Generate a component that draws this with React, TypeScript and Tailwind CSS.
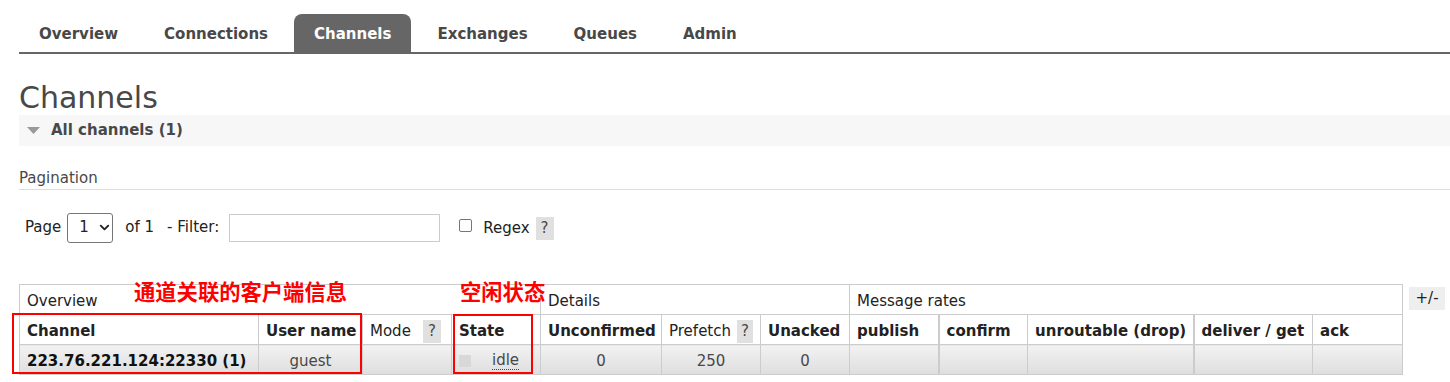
import { ChevronDown } from "lucide-react";

const FONT = "font-['DejaVu_Sans',Verdana,sans-serif]";

function Q() {
  return (
    <span className="inline-flex items-center justify-center w-[18px] h-[23px] bg-[#e0e0e0] text-[#484848] font-normal text-[15px] align-middle">
      ?
    </span>
  );
}

export default function App() {
  const nav = ["Overview", "Connections", "Channels", "Exchanges", "Queues", "Admin"];
  const widths = [239, 104, 89, 89, 121, 99, 89, 89, 89, 166, 119, 90];
  const th = "h-[30px] border border-[#ccc] px-[7px] pt-[3px] text-left align-middle whitespace-nowrap text-[15px]";
  const td = "h-[30px] border border-[#ccc] px-[7px] pt-[3px] align-middle whitespace-nowrap text-[15px] bg-gradient-to-b from-[#f2f2f2] to-[#dedede]";
  return (
    <div className={`relative w-[1450px] h-[382px] overflow-hidden bg-white ${FONT} text-[#484848]`}>
      <div className="pl-[19px]">
        {/* nav */}
        <div className="pt-[14px]">
          <div className="flex h-[40px] border-b-2 border-[#666] gap-[6px]">
            {nav.map((n) => (
              <div
                key={n}
                className={`flex items-center pt-[2px] px-5 text-[15px] font-bold ${
                  n === "Channels" ? "bg-[#666] text-white rounded-t-[8px]" : "text-[#484848]"
                }`}
              >
                {n}
              </div>
            ))}
          </div>
        </div>

        {/* heading */}
        <h1 className="mt-[27px] text-[30px] leading-[34px] font-normal text-[#484848]">Channels</h1>

        {/* section band */}
        <div className="h-[31px] bg-[#f7f7f7] flex items-center pl-[8px]">
          <svg width="13" height="8" viewBox="0 0 13 8">
            <polygon points="0,0 13,0 6.5,7" fill="#999" />
          </svg>
          <span className="ml-[11px] text-[15px] font-bold text-[#484848]">All channels (1)</span>
        </div>

        {/* pagination */}
        <div className="mt-[23px] border-b border-[#ddd] pb-[2px] text-[15px] leading-[18px] text-[#484848]">
          Pagination
        </div>

        <div className="mt-[22px] h-[30px] flex items-center pl-[6px] pt-[1px] text-[15px] text-[#222]">
          <span>Page</span>
          <div className="ml-[6px] w-[46px] h-[30px] border border-[#767676] rounded-[3px] flex items-center pl-[11px] gap-[8px]">
            <span>1</span>
            <ChevronDown size={15} strokeWidth={3} className="text-[#222]" />
          </div>
          <span className="ml-[12px]">of 1</span>
          <span className="ml-[13px]">- Filter:</span>
          <div className="ml-[10px] w-[211px] h-[28px] border border-[#ccc]" />
          <div className="ml-[19px] w-[13px] h-[13px] border border-[#767676] rounded-[2px] -mt-[4px]" />
          <span className="ml-[11px] mt-[2px]">Regex</span>
          <span className="ml-[6px] mt-[2px]">
            <Q />
          </span>
        </div>

        {/* table */}
        <div className="mt-[42px] flex items-start">
          <table className="table-fixed border-collapse w-[1383px] text-[#222]">
            <colgroup>
              {widths.map((w, i) => (
                <col key={i} style={{ width: w }} />
              ))}
            </colgroup>
            <thead>
              <tr>
                <th colSpan={4} className={`${th} font-normal`}>
                  Overview
                </th>
                <th colSpan={3} className={`${th} font-normal`}>
                  Details
                </th>
                <th colSpan={5} className={`${th} font-normal`}>
                  Message rates
                </th>
              </tr>
              <tr>
                <th className={`${th} font-bold`}>Channel</th>
                <th className={`${th} font-bold`}>User name</th>
                <th className={`${th} font-normal`}>
                  <span className="flex items-center gap-[12px]">
                    Mode <Q />
                  </span>
                </th>
                <th className={`${th} font-bold`}>State</th>
                <th className={`${th} font-bold`}>Unconfirmed</th>
                <th className={`${th} font-normal`}>
                  <span className="flex items-center gap-[6px]">
                    Prefetch <Q />
                  </span>
                </th>
                <th className={`${th} font-bold`}>Unacked</th>
                <th className={`${th} font-bold`}>publish</th>
                <th className={`${th} font-bold border-l-2`}>confirm</th>
                <th className={`${th} font-bold`}>unroutable (drop)</th>
                <th className={`${th} font-bold border-l-2`}>deliver / get</th>
                <th className={`${th} font-bold`}>ack</th>
              </tr>
            </thead>
            <tbody>
              <tr>
                <td className={`${td} font-bold text-[#111]`}>223.76.221.124:22330 (1)</td>
                <td className={`${td} text-center text-[#484848]`}>guest</td>
                <td className={td}></td>
                <td className={td}>
                  <div className="flex items-center">
                    <span className="w-[12px] h-[12px] bg-[#d8d8d8] inline-block" />
                    <span className="ml-[21px] text-[#484848] border-b border-dotted border-[#484848] leading-[17px]">
                      idle
                    </span>
                  </div>
                </td>
                <td className={`${td} text-center text-[#484848]`}>0</td>
                <td className={`${td} text-center text-[#484848]`}>250</td>
                <td className={`${td} text-center text-[#484848]`}>0</td>
                <td className={td}></td>
                <td className={`${td} border-l-2`}></td>
                <td className={td}></td>
                <td className={`${td} border-l-2`}></td>
                <td className={td}></td>
              </tr>
            </tbody>
          </table>
          <div className="ml-[6px] mt-[3px] w-[36px] h-[23px] bg-[#eee] flex items-center justify-center text-[15px] text-[#222]">
            +/-
          </div>
        </div>
      </div>

      {/* annotations */}
      <div className="absolute left-[134px] top-[279px] text-[21.3px] leading-[24px] font-bold text-[#ff0000] font-['Noto_Sans_CJK_SC',sans-serif]">
        通道关联的客户端信息
      </div>
      <div className="absolute left-[460px] top-[279px] text-[21.3px] leading-[24px] font-bold text-[#ff0000] font-['Noto_Sans_CJK_SC',sans-serif]">
        空闲状态
      </div>
      <div className="absolute left-[12px] top-[313px] w-[350px] h-[61px] border-2 border-[#ff0000]" />
      <div className="absolute left-[453px] top-[314px] w-[80px] h-[60px] border-2 border-[#ff0000]" />
    </div>
  );
}
